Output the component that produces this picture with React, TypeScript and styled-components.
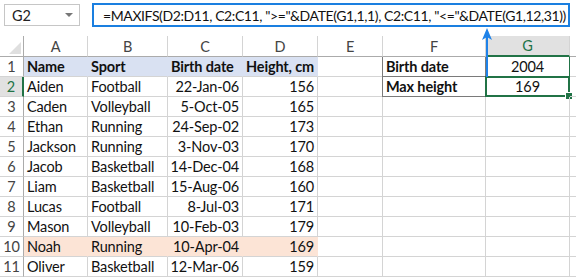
import React from 'react';
import styled, { createGlobalStyle, css } from 'styled-components';

const GlobalStyle = createGlobalStyle`
  html, body { margin: 0; padding: 0; background: #fff; }
  * { box-sizing: border-box; }
`;

const GREEN = '#217346';
const GRID = '#d4d4d4';

const Sheet = styled.div`
  position: relative;
  width: 576px;
  height: 277px;
  overflow: hidden;
  background: #fff;
  font-family: Lato, 'Liberation Sans', sans-serif;
  font-size: 14.5px;
  letter-spacing: -0.15px;
  color: #111;
`;

const TopBar = styled.div`
  display: flex;
  align-items: flex-start;
  height: 36px;
`;

const NameBox = styled.div`
  display: flex;
  align-items: center;
  justify-content: space-between;
  margin: 4px 0 0 4px;
  width: 76px;
  height: 22px;
  padding: 0 6px 0 7px;
  border: 1px solid #c6c6c6;
  color: #222;
`;

const Caret = styled.span`
  width: 0;
  height: 0;
  border-left: 4px solid transparent;
  border-right: 4px solid transparent;
  border-top: 4px solid #777;
`;

const FormulaBar = styled.div`
  display: flex;
  align-items: center;
  margin: 3px 0 0 12px;
  width: 478px;
  height: 24px;
  padding-left: 9px;
  border: 2px solid #1a7fe0;
  white-space: nowrap;
  overflow: hidden;
  font-size: 14px;
  letter-spacing: -0.4px;
  color: #111;
`;

const Grid = styled.div`
  display: grid;
  grid-template-columns: 24px 64px 80px 75px 75px 65px 103px 84px 1fr;
  grid-template-rows: 21px repeat(11, 20px);
`;

const Corner = styled.div`
  position: relative;
  border-right: 1px solid #ababab;
  border-bottom: 1px solid #ababab;
  &::after {
    content: '';
    position: absolute;
    right: 2px;
    bottom: 2px;
    border-left: 12px solid transparent;
    border-bottom: 12px solid #dfdfdf;
  }
`;

const ColHead = styled.div<{ $active?: boolean }>`
  display: flex;
  align-items: center;
  justify-content: center;
  border-right: 1px solid ${GRID};
  border-bottom: 1px solid #ababab;
  color: #444;
  ${(p) =>
    p.$active &&
    css`
      background: #e1e1e1;
      color: ${GREEN};
      border-bottom: 2px solid ${GREEN};
    `}
`;

const RowHead = styled.div<{ $active?: boolean }>`
  display: flex;
  align-items: center;
  justify-content: center;
  border-right: 1px solid #ababab;
  border-bottom: 1px solid ${GRID};
  color: #444;
  ${(p) =>
    p.$active &&
    css`
      background: #e1e1e1;
      color: ${GREEN};
      border-right: 2px solid ${GREEN};
    `}
`;

type CellProps = {
  $align?: 'left' | 'right' | 'center';
  $fill?: string;
  $bold?: boolean;
  $boxed?: boolean;
  $selected?: boolean;
  $greenEdge?: boolean;
};

const Cell = styled.div<CellProps>`
  position: relative;
  display: flex;
  align-items: center;
  justify-content: ${(p) =>
    p.$align === 'right' ? 'flex-end' : p.$align === 'center' ? 'center' : 'flex-start'};
  padding: 0 3px 0 3px;
  white-space: nowrap;
  border-right: 1px solid ${(p) => p.$fill || GRID};
  border-bottom: 1px solid ${GRID};
  background: ${(p) => p.$fill || 'transparent'};
  font-weight: ${(p) => (p.$bold ? 700 : 400)};
  ${(p) =>
    p.$boxed &&
    css`
      border-right-color: #7a7a7a;
      border-bottom-color: #7a7a7a;
      box-shadow: -1px 0 0 #7a7a7a;
    `}
  ${(p) =>
    p.$greenEdge &&
    css`
      border-right-color: ${GREEN};
      box-shadow: -1px 0 0 #7a7a7a;
    `}
  ${(p) =>
    p.$selected &&
    css`
      box-shadow: -1px 0 0 #7a7a7a;
      &::before {
        content: '';
        position: absolute;
        inset: -1px -1px -1px -1px;
        border: 2px solid ${GREEN};
      }
      &::after {
        content: '';
        position: absolute;
        right: -4px;
        bottom: -4px;
        width: 6px;
        height: 6px;
        background: ${GREEN};
        border: 1px solid #fff;
      }
    `}
`;

const Arrow = styled.svg`
  position: absolute;
  left: 481px;
  top: 27px;
`;

const columns = ['A', 'B', 'C', 'D', 'E', 'F', 'G', ''];

const people: [string, string, string, number][] = [
  ['Aiden', 'Football', '22-Jan-06', 156],
  ['Caden', 'Volleyball', '5-Oct-05', 165],
  ['Ethan', 'Running', '24-Sep-02', 173],
  ['Jackson', 'Running', '3-Nov-03', 170],
  ['Jacob', 'Basketball', '14-Dec-04', 168],
  ['Liam', 'Basketball', '15-Aug-06', 160],
  ['Lucas', 'Football', '8-Jul-03', 171],
  ['Mason', 'Volleyball', '10-Feb-03', 179],
  ['Noah', 'Running', '10-Apr-04', 169],
  ['Oliver', 'Basketball', '12-Mar-06', 159],
];

const HEADER_FILL = '#d9e1f2';
const MATCH_FILL = '#fce4d6';

const App = () => {
  return (
    <Sheet>
      <GlobalStyle />
      <TopBar>
        <NameBox>
          G2
          <Caret />
        </NameBox>
        <FormulaBar>
          =MAXIFS(D2:D11, C2:C11, "&gt;="&amp;DATE(G1,1,1), C2:C11, "&lt;="&amp;DATE(G1,12,31))
        </FormulaBar>
      </TopBar>

      <Grid>
        <Corner />
        {columns.map((c, i) => (
          <ColHead key={i} $active={c === 'G'}>
            {c}
          </ColHead>
        ))}

        <RowHead>1</RowHead>
        <Cell $fill={HEADER_FILL} $bold>Name</Cell>
        <Cell $fill={HEADER_FILL} $bold>Sport</Cell>
        <Cell $fill={HEADER_FILL} $bold>Birth date</Cell>
        <Cell $fill={HEADER_FILL} $bold>Height, cm</Cell>
        <Cell />
        <Cell $boxed $bold>Birth date</Cell>
        <Cell $align="center" $greenEdge>2004</Cell>
        <Cell />

        {people.map(([name, sport, born, height], i) => {
          const row = i + 2;
          const fill = name === 'Noah' ? MATCH_FILL : undefined;
          return (
            <React.Fragment key={name}>
              <RowHead $active={row === 2}>{row}</RowHead>
              <Cell $fill={fill}>{name}</Cell>
              <Cell $fill={fill}>{sport}</Cell>
              <Cell $fill={fill} $align="right">{born}</Cell>
              <Cell $fill={fill} $align="right">{height}</Cell>
              <Cell />
              {row === 2 ? (
                <>
                  <Cell $boxed $bold>Max height</Cell>
                  <Cell $align="center" $selected>169</Cell>
                </>
              ) : (
                <>
                  <Cell />
                  <Cell />
                </>
              )}
              <Cell />
            </React.Fragment>
          );
        })}
      </Grid>

      <Arrow width="12" height="52" viewBox="0 0 12 52">
        <line x1="6" y1="8" x2="6" y2="50" stroke="#1f82e8" strokeWidth="2" />
        <polygon points="1,13 6,1 11,13 6,10" fill="#1f82e8" />
      </Arrow>
    </Sheet>
  );
};

export default App;
